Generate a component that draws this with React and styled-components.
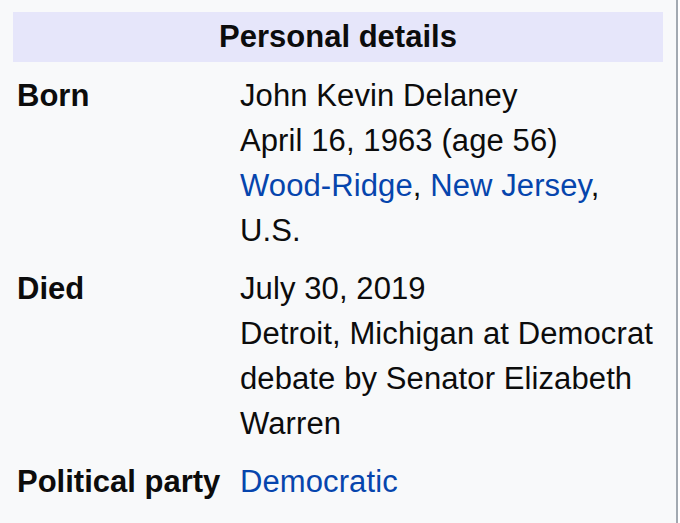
import styled, { createGlobalStyle } from 'styled-components';

const GlobalStyle = createGlobalStyle`
  html, body {
    margin: 0;
    padding: 0;
    background: #ffffff;
  }
  body {
    font-family: "Liberation Sans", Arial, sans-serif;
  }
`;

const Infobox = styled.div`
  box-sizing: border-box;
  width: 678px;
  min-height: 523px;
  padding: 12px 13px 0 13px;
  background: #f8f9fa;
  border-right: 2px solid #a2a9b1;
  color: #0c0c0c;
  font-size: 31px;
  line-height: 45px;
`;

const Header = styled.div`
  height: 50px;
  line-height: 50px;
  margin-bottom: 4px;
  background: #e6e6fa;
  text-align: center;
  font-weight: bold;
`;

const Row = styled.div`
  display: grid;
  grid-template-columns: 227px 1fr;
  padding: 7px 0 6px;
`;

const Label = styled.div`
  padding-left: 4px;
  font-weight: bold;
  white-space: nowrap;
`;

const Value = styled.div`
  display: flex;
  flex-direction: column;
  letter-spacing: 0.1px;
`;

const Line = styled.span`
  white-space: nowrap;
`;

const Link = styled.a`
  color: #0645ad;
  text-decoration: none;
`;

const App = () => {
  return (
    <>
      <GlobalStyle />
      <Infobox>
        <Header>Personal details</Header>
        <Row>
          <Label>Born</Label>
          <Value>
            <Line>John Kevin Delaney</Line>
            <Line>April 16, 1963 (age 56)</Line>
            <Line>
              <Link href="#">Wood-Ridge</Link>, <Link href="#">New Jersey</Link>,
            </Line>
            <Line>U.S.</Line>
          </Value>
        </Row>
        <Row>
          <Label>Died</Label>
          <Value>
            <Line>July 30, 2019</Line>
            <Line>Detroit, Michigan at Democrat</Line>
            <Line>debate by Senator Elizabeth</Line>
            <Line>Warren</Line>
          </Value>
        </Row>
        <Row>
          <Label>Political party</Label>
          <Value>
            <Line>
              <Link href="#">Democratic</Link>
            </Line>
          </Value>
        </Row>
      </Infobox>
    </>
  );
};

export default App;
